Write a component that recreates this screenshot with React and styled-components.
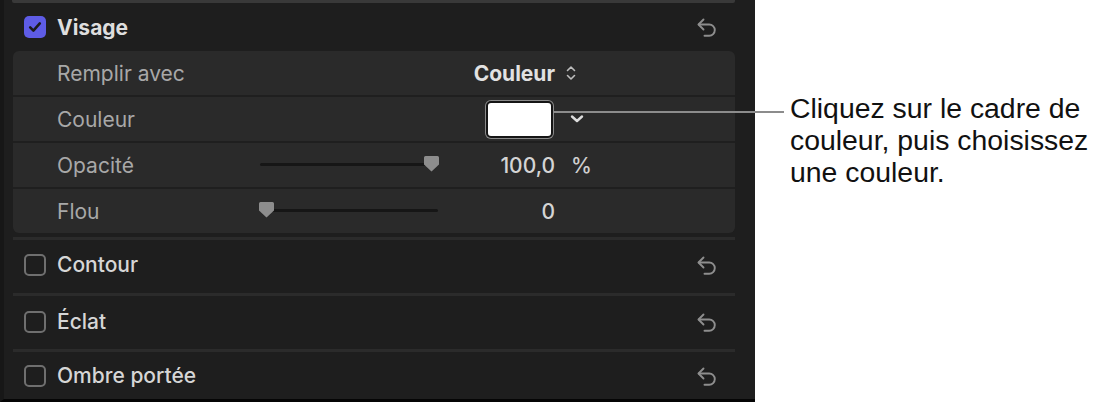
import React from 'react'
import styled, { createGlobalStyle } from 'styled-components'

const GlobalStyle = createGlobalStyle`
  html, body {
    margin: 0;
    padding: 0;
    background: #ffffff;
  }
  body {
    font-family: Inter, "Liberation Sans", sans-serif;
    -webkit-font-smoothing: antialiased;
  }
`

const Page = styled.div`
  display: flex;
  width: 1099px;
  height: 402px;
  overflow: hidden;
  background: #ffffff;
`

const Panel = styled.div`
  box-sizing: border-box;
  width: 755px;
  height: 402px;
  flex-shrink: 0;
  display: flex;
  flex-direction: column;
  background: #1e1e1e;
  border-left: 4px solid #171717;
  border-bottom: 3px solid #050505;
  padding: 0 20px 0 9px;
`

const TopRule = styled.div`
  height: 3px;
  margin-left: -1px;
  background: #393939;
  border-radius: 0 0 2px 2px;
`

const SectionRule = styled.div`
  height: 3px;
  background: #2b2b2b;
  margin-top: ${p => p.$gap || 0}px;
`

const SectionRow = styled.div`
  display: flex;
  align-items: center;
  height: ${p => p.$height}px;
  padding: 0 18px ${p => p.$lift || 0}px 11px;
  box-sizing: border-box;
  gap: 11px;
`

const Title = styled.span`
  flex: 1;
  font-size: 21px;
  font-weight: ${p => (p.$strong ? 700 : 500)};
  color: ${p => (p.$strong ? '#dedede' : '#d6d6d6')};
`

const Box = styled.div`
  box-sizing: border-box;
  width: 22px;
  height: 22px;
  border-radius: 5px;
  display: flex;
  align-items: center;
  justify-content: center;
  background: ${p => (p.$checked ? '#5e5ce6' : 'transparent')};
  border: ${p => (p.$checked ? 'none' : '2px solid #6f6f6f')};
`

const SubPanel = styled.div`
  display: flex;
  flex-direction: column;
  gap: 2px;
  background: #1f1f1f;
  border-radius: 6px;
  overflow: hidden;
`

const ParamRow = styled.div`
  display: grid;
  grid-template-columns: 203px 180px 115px 60px;
  align-items: center;
  height: 44px;
  padding-left: 44px;
  background: #2a2a2a;
`

const Label = styled.span`
  font-size: 21px;
  color: #a8a8a8;
`

const Value = styled.span`
  grid-column: 3;
  justify-self: end;
  display: flex;
  align-items: center;
  font-size: 21px;
  font-weight: ${p => (p.$bold ? 700 : 500)};
  color: ${p => (p.$bold ? '#e2e2e2' : '#d4d4d4')};
`

const Unit = styled.span`
  grid-column: 4;
  display: flex;
  align-items: center;
  padding-left: ${p => p.$pad || 16}px;
  font-size: 21px;
  font-weight: 500;
  color: #cfcfcf;
`

const Swatch = styled.div`
  box-sizing: border-box;
  width: 67px;
  height: 37px;
  margin-right: 2px;
  background: #ffffff;
  border: 2px solid #151515;
  border-radius: 5px;
  box-shadow: 0 0 0 1px #8a8a8a;
`

const SliderWrap = styled.div`
  grid-column: 2;
  position: relative;
  width: 178px;
  height: 17px;
  margin-bottom: 4px;
`

const Track = styled.div`
  position: absolute;
  left: 0;
  right: 0;
  top: 8px;
  height: 3px;
  border-radius: 2px;
  background: #161616;
`

const Thumb = styled.svg`
  position: absolute;
  top: 0;
`

const Callout = styled.div`
  position: relative;
  flex: 1;
  padding: 92px 0 0 35px;
  font-family: "Liberation Sans", Arial, sans-serif;
  font-size: 28.4px;
  line-height: 32px;
  color: #111111;
  white-space: nowrap;
`

const Leader = styled.div`
  position: absolute;
  left: -202px;
  top: 111px;
  width: 231px;
  height: 2px;
  background: #8c8c8c;
`

const Check = () => (
  <svg width="16" height="16" viewBox="0 0 16 16">
    <path d="M3.2 8.4 L6.4 11.6 L12.8 4.4" fill="none" stroke="#1b1b1b" strokeWidth="2.6" strokeLinecap="round" strokeLinejoin="round" />
  </svg>
)

const Checkbox = ({ checked }) => (
  <Box $checked={checked}>{checked && <Check />}</Box>
)

const UndoIcon = () => (
  <svg width="20" height="22" viewBox="0 0 20 22">
    <path d="M6.5 3.5 L1.5 8.5 L6.5 13.5" fill="none" stroke="#8e8e8e" strokeWidth="1.9" strokeLinecap="round" strokeLinejoin="round" />
    <path d="M1.8 8.5 H12.2 A5.6 5.6 0 0 1 12.2 19.7 H7.5" fill="none" stroke="#8e8e8e" strokeWidth="1.9" strokeLinecap="round" />
  </svg>
)

const UpDown = () => (
  <svg width="12" height="20" viewBox="0 0 12 20">
    <path d="M2.5 7.5 L6 4 L9.5 7.5" fill="none" stroke="#bdbdbd" strokeWidth="1.6" strokeLinecap="round" strokeLinejoin="round" />
    <path d="M2.5 12.5 L6 16 L9.5 12.5" fill="none" stroke="#bdbdbd" strokeWidth="1.6" strokeLinecap="round" strokeLinejoin="round" />
  </svg>
)

const ChevronDown = () => (
  <svg width="14" height="10" viewBox="0 0 14 10">
    <path d="M2 2.5 L7 7 L12 2.5" fill="none" stroke="#dddddd" strokeWidth="2.4" strokeLinecap="round" strokeLinejoin="round" />
  </svg>
)

const Slider = ({ value }) => (
  <SliderWrap>
    <Track />
    <Thumb width="17" height="17" viewBox="0 0 17 17" style={{ left: -2 + value * 165 }}>
      <path d="M2.5 1 H14.5 A1.5 1.5 0 0 1 16 2.5 V9.5 L8.5 16.5 L1 9.5 V2.5 A1.5 1.5 0 0 1 2.5 1 Z" fill="#8d8d8d" />
    </Thumb>
  </SliderWrap>
)

const sections = [
  { name: 'Contour', height: 53, lift: 4 },
  { name: 'Éclat', height: 53, lift: 2 },
  { name: 'Ombre portée', height: 47, lift: 0 }
]

const App = () => (
  <Page>
    <GlobalStyle />
    <Panel>
      <TopRule />
      <SectionRow $height={48}>
        <Checkbox checked />
        <Title $strong>Visage</Title>
        <UndoIcon />
      </SectionRow>
      <SubPanel>
        <ParamRow>
          <Label>Remplir avec</Label>
          <Value $bold>Couleur</Value>
          <Unit $pad={10}><UpDown /></Unit>
        </ParamRow>
        <ParamRow>
          <Label>Couleur</Label>
          <Value><Swatch /></Value>
          <Unit $pad={15}><ChevronDown /></Unit>
        </ParamRow>
        <ParamRow>
          <Label>Opacité</Label>
          <Slider value={1} />
          <Value>100,0</Value>
          <Unit>%</Unit>
        </ParamRow>
        <ParamRow>
          <Label>Flou</Label>
          <Slider value={0} />
          <Value>0</Value>
        </ParamRow>
      </SubPanel>
      {sections.map((s, i) => (
        <React.Fragment key={s.name}>
          <SectionRule $gap={i === 0 ? 4 : 0} />
          <SectionRow $height={s.height} $lift={s.lift}>
            <Checkbox />
            <Title>{s.name}</Title>
            <UndoIcon />
          </SectionRow>
        </React.Fragment>
      ))}
    </Panel>
    <Callout>
      <Leader />
      Cliquez sur le cadre de<br />
      couleur, puis choisissez<br />
      une couleur.
    </Callout>
  </Page>
)

export default App
